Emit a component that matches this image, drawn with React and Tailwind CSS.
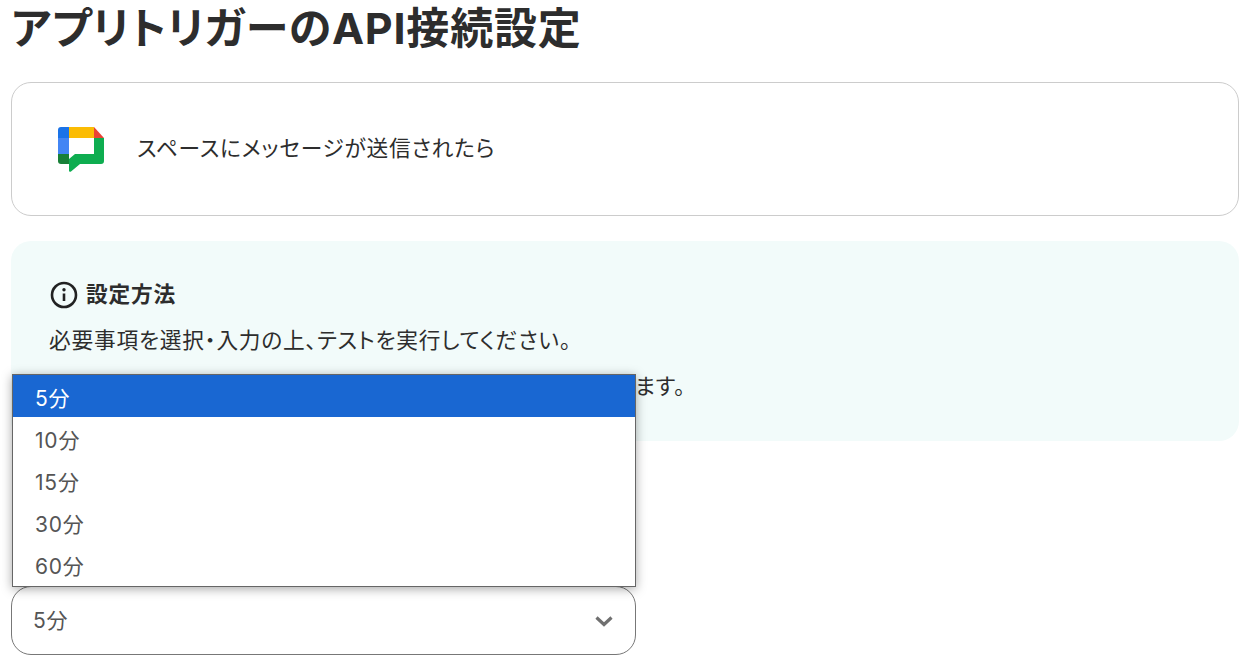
import React from 'react';

const options = ['5分', '10分', '15分', '30分', '60分'];

const ChatLogo = () => (
  <svg width="46" height="46" viewBox="0 0 46 46" className="mt-[1px]">
    <path d="M0 11V3a3 3 0 0 1 3-3h8v11z" fill="#1a73e8" />
    <path d="M11 0h25v11H11z" fill="#fbbc04" />
    <path d="M36 0l10 11H36z" fill="#ea4335" />
    <path d="M0 11h11v16H0z" fill="#4285f4" />
    <path d="M0 27h11v10H3a3 3 0 0 1-3-3z" fill="#188038" />
    <path d="M36 11h10v23a3 3 0 0 1-3 3H22l-9 7.500a1.200 1.200 0 0 1-2-1V32l6-5h19z" fill="#0ead50" />
  </svg>
);

const InfoIcon = () => (
  <svg width="28" height="28" viewBox="0 0 28 28" fill="none">
    <circle cx="14" cy="14" r="12" stroke="#222" strokeWidth="2.6" />
    <circle cx="14" cy="8.8" r="1.7" fill="#222" />
    <path d="M14 12.5v7.5" stroke="#222" strokeWidth="2.6" />
  </svg>
);

export default function App() {
  return (
    <div className="relative w-[1247px] h-[662px] overflow-hidden bg-white pl-[11px] pr-[8px] text-[#2d2d2d] font-['Inter','Noto_Sans_CJK_JP',sans-serif] [font-feature-settings:'palt'] tracking-[0.05em]">
      <h1 className="h-[82px] pt-[3px] text-[43px] leading-[50px] font-bold">アプリトリガーのAPI接続設定</h1>

      <div className="h-[134px] flex items-center gap-[33px] pl-[46px] border border-[#cccccc] rounded-[20px]">
        <ChatLogo />
        <span className="text-[21.7px] mb-[2px]">スペースにメッセージが送信されたら</span>
      </div>

      <div className="mt-[25px] h-[200px] bg-[#f2fbfa] rounded-[20px] pl-[38px] pt-[37px] text-[21.7px]">
        <div className="flex items-center gap-[8px] font-bold h-[32px]">
          <span className="ml-[1px] mt-[1px]"><InfoIcon /></span>
          <span>設定方法</span>
        </div>
        <p className="mt-[14px] leading-[32px]">必要事項を選択・入力の上、テストを実行してください。</p>
        <p className="mt-[14px] leading-[32px] pl-[586px]">ます。</p>
      </div>

      <div className="mt-[145px] w-[625px] h-[69px] flex items-center justify-between pl-[21px] pr-[21px] border border-[#777777] rounded-[20px] text-[21px] text-[#555555]">
        <span>5分</span>
        <svg width="20" height="14" viewBox="0 0 20 14" fill="none">
          <path d="M2.5 3.5L10 10.5L17.5 3.5" stroke="#707070" strokeWidth="3.2" />
        </svg>
      </div>

      {/* open dropdown sits over the content */}
      <ul className="absolute left-[12px] top-[374px] w-[624px] h-[213px] bg-white border border-[#666666] shadow-[0_2px_10px_rgba(0,0,0,0.35)] text-[21px] text-[#555555]">
        {options.map((o, i) => (
          <li
            key={o}
            className={`h-[42px] flex items-center pl-[22px] pt-[5px] ${i === 0 ? 'bg-[#1967d2] text-white' : ''}`}
          >
            {o}
          </li>
        ))}
      </ul>
    </div>
  );
}
